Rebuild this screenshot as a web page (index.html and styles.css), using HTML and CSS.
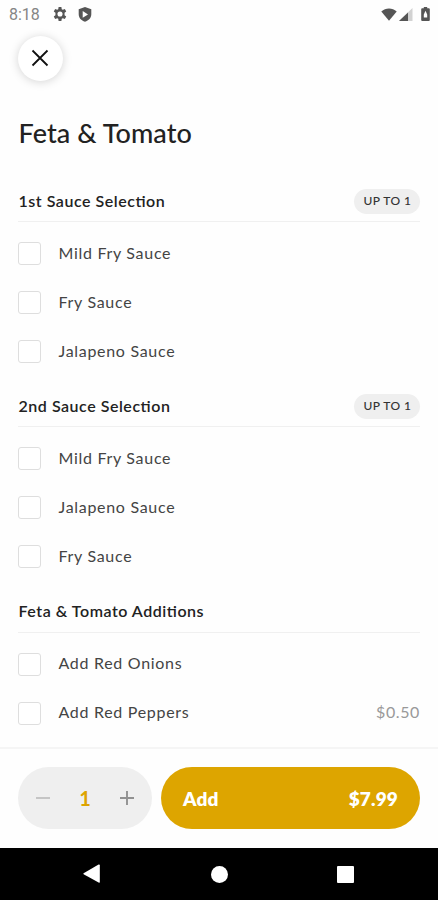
FILE: index.html
```html
<!DOCTYPE html>
<html lang="en">

<head>
    <meta charset="UTF-8">
    <meta name="viewport" content="width=device-width, initial-scale=1.0">
    <title>Feta &amp; Tomato</title>
    <link rel="stylesheet" href="styles.css">
</head>

<body>
    <div class="screen">
        <div class="status-bar">
            <span class="clock">8:18</span>
            <svg class="gear" width="14" height="14" viewBox="0 0 24 24">
                <path fill="#555" fill-rule="evenodd" d="M9.600 0h4.800l.6 3.700 1.800 1 3.500-1.300 2.400 4.200-2.900 2.300v4.200l2.900 2.300-2.400 4.200-3.500-1.300-1.800 1-.6 3.700H9.600L9 20.300l-1.800-1-3.500 1.300-2.400-4.200 2.900-2.300V9.900L1.300 7.600l2.400-4.200 3.500 1.300 1.800-1zM12 7.600a4.400 4.400 0 1 0 0 8.800a4.400 4.400 0 1 0 0-8.800z" />
            </svg>
            <svg class="shield" width="14" height="15" viewBox="0 0 14 15">
                <path fill="#555" fill-rule="evenodd" d="M7 0l6.300 2.300v5c0 3.600-2.600 6.300-6.300 7.500C3.300 13.600.7 10.900.7 7.300v-5zM4.700 4.100v6.600L10 7.400z" />
            </svg>
            <div class="signals">
                <svg width="16" height="13" viewBox="0 0 16 13">
                    <path fill="#555" d="M.3 3.600C4.700-.4 11.300-.4 15.700 3.600L8 12.800z" />
                </svg>
                <svg width="14" height="13" viewBox="0 0 14 13">
                    <path fill="#d2d2d2" d="M13.500 0v13H0z" />
                    <path fill="#555" d="M9 4.500V13H0z" />
                </svg>
                <svg class="battery" width="9" height="14" viewBox="0 0 9 14">
                    <path fill="#555" fill-rule="evenodd" d="M2.800 0h3.400v1.300h1.600q1 0 1 1V13q0 1-1 1H1.200q-1 0-1-1V2.300q0-1 1-1h1.600zM4.500 3.800L2.800 7.500v3h3.400v-3z" />
                </svg>
            </div>
        </div>

        <button class="close">
            <svg width="18" height="18" viewBox="0 0 18 18">
                <path d="M1.500 1.500l15 15M16.500 1.500l-15 15" stroke="#111" stroke-width="1.800" />
            </svg>
        </button>

        <div class="content">
            <h1>Feta &amp; Tomato</h1>

            <div class="section">
                <div class="section-header">
                    <h2>1st Sauce Selection</h2>
                    <span class="badge">UP TO 1</span>
                </div>
                <div class="option"><span class="checkbox"></span><span class="name">Mild Fry Sauce</span></div>
                <div class="option"><span class="checkbox"></span><span class="name">Fry Sauce</span></div>
                <div class="option"><span class="checkbox"></span><span class="name">Jalapeno Sauce</span></div>
            </div>

            <div class="section">
                <div class="section-header">
                    <h2>2nd Sauce Selection</h2>
                    <span class="badge">UP TO 1</span>
                </div>
                <div class="option"><span class="checkbox"></span><span class="name">Mild Fry Sauce</span></div>
                <div class="option"><span class="checkbox"></span><span class="name">Jalapeno Sauce</span></div>
                <div class="option"><span class="checkbox"></span><span class="name">Fry Sauce</span></div>
            </div>

            <div class="section">
                <div class="section-header">
                    <h2>Feta &amp; Tomato Additions</h2>
                </div>
                <div class="option"><span class="checkbox"></span><span class="name">Add Red Onions</span></div>
                <div class="option"><span class="checkbox"></span><span class="name">Add Red Peppers</span><span class="price">$0.50</span></div>
            </div>
        </div>

        <div class="footer">
            <div class="stepper">
                <svg width="14" height="14" viewBox="0 0 14 14">
                    <path d="M0 7h14" stroke="#bdbdbd" stroke-width="1.700" />
                </svg>
                <span class="count">1</span>
                <svg width="14" height="14" viewBox="0 0 14 14">
                    <path d="M0 7h14M7 0v14" stroke="#919191" stroke-width="1.900" />
                </svg>
            </div>
            <button class="add"><span>Add</span><span>$7.99</span></button>
        </div>

        <div class="nav-bar">
            <svg width="18" height="20" viewBox="0 0 18 20">
                <path fill="#fff" d="M.6 9.300L15.600.6q1.200-.5 1.200.7v16.600q0 1.200-1.200.6L.6 10.200q-.6-.4 0-.9z" />
            </svg>
            <span class="home"></span>
            <span class="recent"></span>
        </div>
    </div>
</body>

</html>
```
FILE: styles.css
```css
body {
    margin: 0;
    font-family: Lato, 'Open Sans', sans-serif;
    background: #fff;
    color: #222;
}

h1,
h2 {
    margin: 0;
}

button {
    border: none;
    padding: 0;
    font-family: inherit;
    cursor: pointer;
}

.screen {
    display: flex;
    flex-direction: column;
    height: 900px;
    overflow: hidden;
    background: #fefefe;
}

.status-bar {
    display: flex;
    align-items: center;
    flex: none;
    height: 28px;
    padding: 0 8px 0 9px;
}

.clock {
    width: 44px;
    font-family: Roboto, sans-serif;
    font-size: 16px;
    color: #858585;
}

.shield {
    margin-left: 11px;
}

.signals {
    display: flex;
    align-items: center;
    margin-left: auto;
}

.signals svg {
    margin-left: 2px;
}

.signals .battery {
    margin-left: 8px;
}

.close {
    display: flex;
    align-items: center;
    justify-content: center;
    box-sizing: border-box;
    flex: none;
    width: 45px;
    height: 45px;
    margin: 8px 0 0 18px;
    padding: 0 1px 1px 0;
    border-radius: 50%;
    background: #fff;
    box-shadow: 0 1px 10px rgba(0, 0, 0, .17);
}

.content {
    flex: 1;
    min-height: 0;
    overflow: hidden;
    padding: 32px 18px 0;
}

h1 {
    height: 40px;
    margin-bottom: 18px;
    padding-left: .5px;
    font-size: 27px;
    font-weight: 500;
    line-height: 40px;
    letter-spacing: .08px;
}

.section {
    padding-top: 10px;
}

.section-header {
    display: flex;
    align-items: center;
    justify-content: space-between;
    height: 40px;
    margin-bottom: 7px;
    border-bottom: 1px solid #f0f0f0;
}

.section + .section {
    padding-top: 10.3px;
}

h2 {
    padding: 0 0 2px .5px;
    font-size: 16px;
    font-weight: 600;
    letter-spacing: .53px;
    font-feature-settings: 'liga' 1;
}

.badge {
    box-sizing: border-box;
    width: 66px;
    height: 25px;
    padding-left: 1px;
    border-radius: 13px;
    background: #efefef;
    color: #333;
    font-size: 12px;
    font-weight: 500;
    line-height: 24px;
    letter-spacing: .45px;
    text-align: center;
}

.option {
    display: flex;
    align-items: center;
    height: 49px;
    color: #444;
    font-size: 16px;
    letter-spacing: .7px;
}

.checkbox {
    box-sizing: border-box;
    width: 23px;
    height: 23px;
    margin-right: 17.500px;
    border: 1.5px solid #dedede;
    border-radius: 3px;
    background: #fff;
}

.name,
.price {
    padding-bottom: 3px;
}

.price {
    margin-left: auto;
    color: #999;
    letter-spacing: .6px;
}

.footer {
    display: flex;
    gap: 9px;
    box-sizing: border-box;
    flex: none;
    height: 101px;
    padding: 18px 18px 0;
    border-top: 2px solid #f5f5f5;
}

.stepper {
    display: flex;
    align-items: center;
    justify-content: space-between;
    box-sizing: border-box;
    width: 134px;
    height: 62px;
    padding: 0 18px;
    border-radius: 31px;
    background: #efefef;
}

.count {
    color: #dda400;
    font-size: 20px;
    font-weight: 700;
}

.add {
    display: flex;
    align-items: center;
    justify-content: space-between;
    flex: 1;
    height: 62px;
    padding: 0 22px;
    border-radius: 31px;
    background: #dda500;
    color: #fff;
    font-size: 19px;
    font-weight: 800;
    letter-spacing: .15px;
}

.nav-bar {
    display: flex;
    align-items: center;
    justify-content: space-between;
    box-sizing: border-box;
    flex: none;
    height: 52px;
    padding: 0 84px 0 83px;
    background: #000;
}

.home {
    width: 17px;
    height: 17px;
    border-radius: 50%;
    background: #fff;
}

.recent {
    width: 17px;
    height: 17px;
    border-radius: 1px;
    background: #fff;
}
```
